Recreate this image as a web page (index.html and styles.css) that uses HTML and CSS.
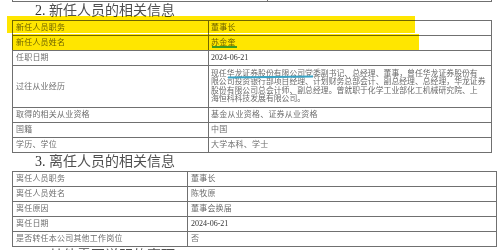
FILE: index.html
```html
<!DOCTYPE html>
<html lang="zh-CN">
<head>
<meta charset="utf-8">
<title>人员变更信息</title>
<link rel="stylesheet" href="styles.css">
</head>
<body>
<div class="page">
  <div class="prev"><div class="prev-l"></div><div class="prev-r"></div></div>

  <h2 class="sec"><span class="num">2.</span> 新任人员的相关信息</h2>
  <div class="tbl t1">
    <div class="row"><div class="k">新任人员职务</div><div class="v">董事长</div></div>
    <div class="row"><div class="k">新任人员姓名</div><div class="v">苏金奎</div></div>
    <div class="row"><div class="k">任职日期</div><div class="v date">2024-06-21</div></div>
    <div class="row tall"><div class="k">过往从业经历</div><div class="v para">现任华龙证券股份有限公司党委副书记、总经理、董事，曾任华龙证券股份有<br>限公司投资银行部项目经理、计划财务总部会计、副总经理、总经理，华龙证券<br>股份有限公司总会计师、副总经理。曾就职于化学工业部化工机械研究院、上<br>海恒科科技发展有限公司。</div></div>
    <div class="row"><div class="k">取得的相关从业资格</div><div class="v">基金从业资格、证券从业资格</div></div>
    <div class="row"><div class="k">国籍</div><div class="v">中国</div></div>
    <div class="row"><div class="k">学历、学位</div><div class="v">大学本科、学士</div></div>
  </div>

  <h2 class="sec"><span class="num">3.</span> 离任人员的相关信息</h2>
  <div class="tbl t3">
    <div class="row"><div class="k">离任人员职务</div><div class="v">董事长</div></div>
    <div class="row"><div class="k">离任人员姓名</div><div class="v">陈牧原</div></div>
    <div class="row"><div class="k">离任原因</div><div class="v">董事会换届</div></div>
    <div class="row"><div class="k">离任日期</div><div class="v date">2024-06-21</div></div>
    <div class="row"><div class="k">是否转任本公司其他工作岗位</div><div class="v">否</div></div>
  </div>

  <h2 class="sec"><span class="num">4.</span> 其他需要说明的事项</h2>

  <div class="mark mark-1"></div>
  <div class="mark mark-2"></div>
  <div class="uline uline-green"></div>
  <div class="uline uline-teal"></div>
</div>
</body>
</html>
```
FILE: styles.css
```css
html, body {
  margin: 0;
  padding: 0;
  background: #ffffff;
}
body {
  font-family: "Liberation Serif", "Noto Sans CJK SC", serif;
  color: #6e6e6e;
  width: 500px;
  height: 250px;
  overflow: hidden;
}
.page {
  position: relative;
  padding-left: 12px;
}
.prev {
  width: 478px;
  height: 1px;
  border: 1px solid #707070;
  border-top: none;
  display: grid;
  grid-template-columns: 255px 1fr;
}
.prev-l {
  border-right: 1px solid #707070;
}
.sec {
  margin: 0;
  height: 18px;
  line-height: 18px;
  font-size: 14px;
  font-weight: normal;
  color: #505050;
  padding-left: 23px;
  white-space: nowrap;
}
.sec .num {
  color: #333333;
}
.tbl {
  border: 1px solid #707070;
  font-size: 8px;
  letter-spacing: 0.2px;
}
.t1 {
  width: 478px;
}
.t3 {
  width: 483px;
}
.row {
  display: grid;
  height: 14px;
}
.row + .row {
  border-top: 1px solid #707070;
}
.t1 .row {
  grid-template-columns: 196px 1fr;
}
.t3 .row {
  grid-template-columns: 175px 1fr;
}
.row.tall {
  height: 41px;
}
.k, .v {
  display: flex;
  align-items: center;
  white-space: nowrap;
  line-height: 1;
}
.k {
  padding-left: 3px;
  border-right: 1px solid #707070;
}
.v {
  padding-left: 2px;
}
.t3 .v {
  padding-left: 3px;
}
.v.date {
  color: #333333;
  letter-spacing: 0;
}
.v.para {
  display: block;
  align-self: center;
  font-size: 7.85px;
  line-height: 8.3px;
  letter-spacing: 0;
  color: #6a6a6a;
}
.mark {
  position: absolute;
  background: #ffe600;
  mix-blend-mode: multiply;
}
.mark-1 {
  left: 7px;
  top: 16px;
  width: 408px;
  height: 17px;
}
.mark-2 {
  left: 12px;
  top: 34px;
  width: 407px;
  height: 16px;
}
.uline {
  position: absolute;
  height: 2px;
}
.uline-green {
  left: 212px;
  top: 46px;
  width: 25px;
  background: #3d9b22;
}
.uline-teal {
  left: 228px;
  top: 76px;
  width: 85px;
  height: 1.5px;
  background: #3aa3c4;
  transform: rotate(-0.6deg);
}
```
